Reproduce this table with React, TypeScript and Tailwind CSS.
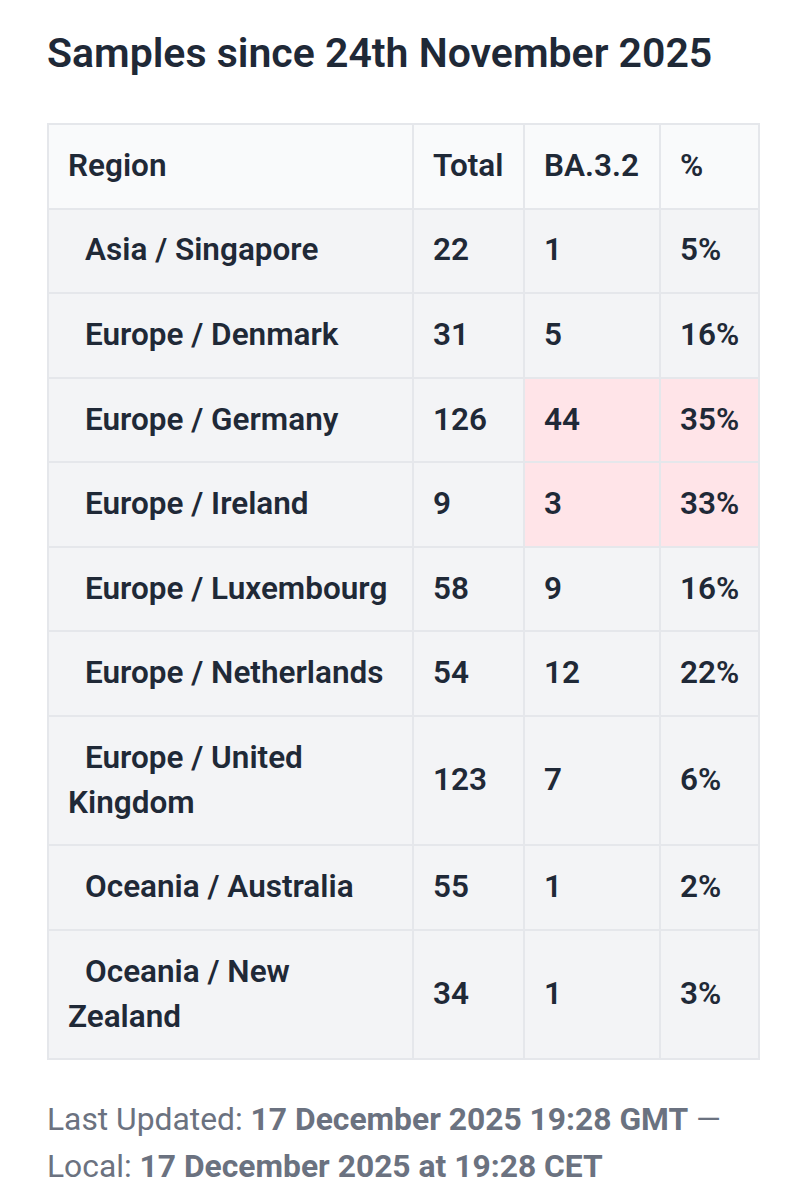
const rows = [
  { region: "Asia / Singapore", total: 22, ba: 1, pct: "5%", hot: false },
  { region: "Europe / Denmark", total: 31, ba: 5, pct: "16%", hot: false },
  { region: "Europe / Germany", total: 126, ba: 44, pct: "35%", hot: true },
  { region: "Europe / Ireland", total: 9, ba: 3, pct: "33%", hot: true },
  { region: "Europe / Luxembourg", total: 58, ba: 9, pct: "16%", hot: false },
  { region: "Europe / Netherlands", total: 54, ba: 12, pct: "22%", hot: false },
  { region: "Europe / United Kingdom", total: 123, ba: 7, pct: "6%", hot: false },
  { region: "Oceania / Australia", total: 55, ba: 1, pct: "2%", hot: false },
  { region: "Oceania / New Zealand", total: 34, ba: 1, pct: "3%", hot: false },
];

const cell = "border-2 border-[#e5e7eb] px-[19px] py-[18.9px] text-left align-middle";

export default function App() {
  return (
    <div
      className="min-h-screen bg-white px-[47px] pt-[25px] text-[#1f2937]"
      style={{ fontFamily: "Roboto, 'Noto Sans', sans-serif" }}
    >
      <h1 className="text-[41px] font-semibold leading-[56px]">
        Samples since 24th November 2025
      </h1>

      <table className="mt-[42px] w-[711px] table-fixed border-collapse text-[31.5px] font-semibold leading-[44.8px]">
        <colgroup>
          <col className="w-[365px]" />
          <col className="w-[111px]" />
          <col className="w-[136px]" />
          <col className="w-[99px]" />
        </colgroup>
        <thead>
          <tr className="bg-[#f9fafb]">
            <th className={cell + " font-semibold"}>Region</th>
            <th className={cell + " font-semibold"}>Total</th>
            <th className={cell + " font-semibold"}>BA.3.2</th>
            <th className={cell + " font-semibold"}>%</th>
          </tr>
        </thead>
        <tbody>
          {rows.map((r) => (
            <tr key={r.region} className="bg-[#f3f4f6]">
              <td className={cell + " indent-[17px]"}>{r.region}</td>
              <td className={cell}>{r.total}</td>
              <td className={cell + (r.hot ? " bg-[#ffe4e8]" : "")}>{r.ba}</td>
              <td className={cell + (r.hot ? " bg-[#ffe4e8]" : "")}>{r.pct}</td>
            </tr>
          ))}
        </tbody>
      </table>

      <p className="mt-[36px] text-[31.8px] leading-[47px] text-[#6b7280]">
        Last Updated: <span className="font-bold">17 December 2025 19:28 GMT</span> —
        Local: <span className="font-bold">17 December 2025 at 19:28 CET</span>
      </p>
    </div>
  );
}
